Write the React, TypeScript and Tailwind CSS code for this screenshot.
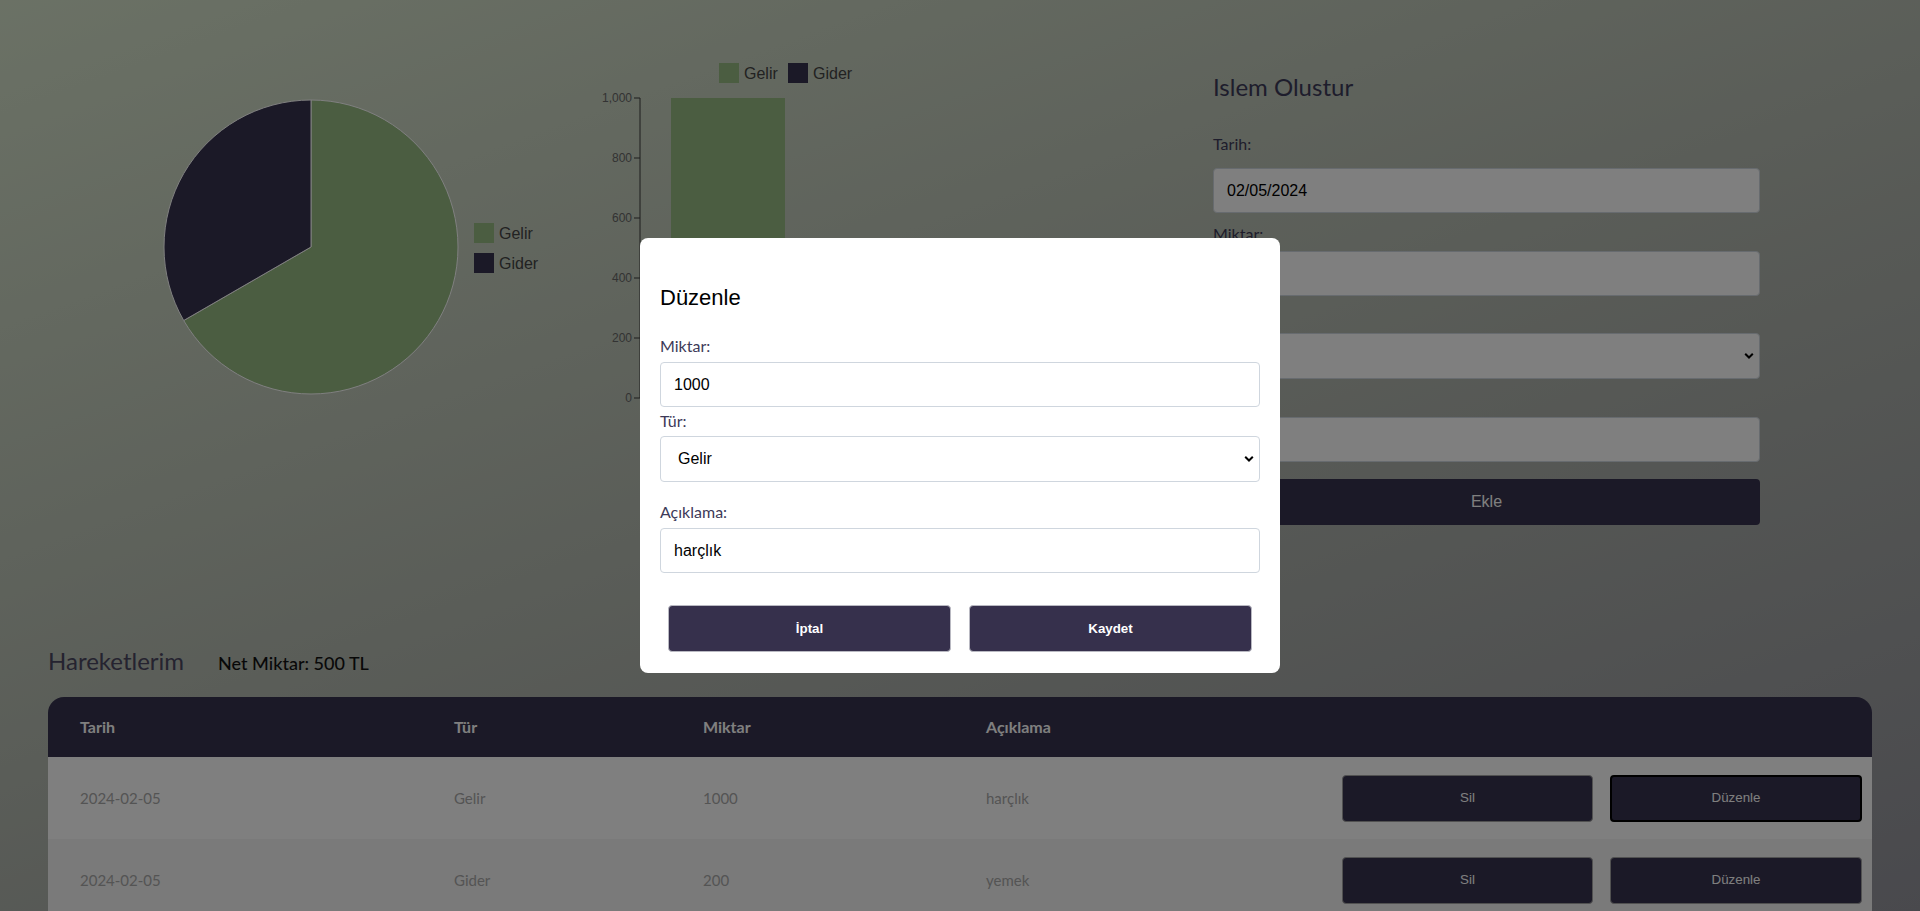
import React from 'react';

const CX = 263;
const CY = 207;
const R = 147;

type Row = { tarih: string; tur: string; miktar: number; aciklama: string };

const ROWS: Row[] = [
  { tarih: '2024-02-05', tur: 'Gelir', miktar: 1000, aciklama: 'harçlık' },
  { tarih: '2024-02-05', tur: 'Gider', miktar: 200, aciklama: 'yemek' },
  { tarih: '2024-02-05', tur: 'Gider', miktar: 300, aciklama: 'fatura' },
];

const GREEN = '#96bb82';
const DARK = '#36324e';

function pt(deg: number) {
  const a = (deg * Math.PI) / 180;
  return [CX + R * Math.sin(a), CY - R * Math.cos(a)];
}

function PieBlock() {
  const gelir = 1000;
  const gider = 500;
  const end = (360 * gelir) / (gelir + gider);
  const [ex, ey] = pt(end);
  return (
    <svg width={540} height={360} className="shrink-0">
      <path
        d={`M${CX},${CY} L${CX},${CY - R} A${R},${R} 0 1 1 ${ex},${ey} Z`}
        fill={GREEN}
        stroke="#fff"
        strokeWidth={1}
      />
      <path
        d={`M${CX},${CY} L${ex},${ey} A${R},${R} 0 0 1 ${CX},${CY - R} Z`}
        fill={DARK}
        stroke="#fff"
        strokeWidth={1}
      />
      {/* legend */}
      <rect x={426} y={183} width={20} height={20} fill={GREEN} />
      <text x={451} y={199} fontSize={16} fill="#444" fontFamily="Liberation Sans, Arial, sans-serif">
        Gelir
      </text>
      <rect x={426} y={213} width={20} height={20} fill={DARK} />
      <text x={451} y={229} fontSize={16} fill="#444" fontFamily="Liberation Sans, Arial, sans-serif">
        Gider
      </text>
    </svg>
  );
}

function BarBlock() {
  const ticks = [0, 200, 400, 600, 800, 1000];
  const y = (v: number) => 358 - (v / 1000) * 300;
  // axis sits at x=52 inside this svg (page x 640)
  return (
    <svg width={540} height={380} className="shrink-0" fontFamily="Liberation Sans, Arial, sans-serif">
      <rect x={131} y={23} width={20} height={20} fill={GREEN} />
      <text x={156} y={39} fontSize={16} fill="#444">Gelir</text>
      <rect x={200} y={23} width={20} height={20} fill={DARK} />
      <text x={225} y={39} fontSize={16} fill="#444">Gider</text>

      <line x1={52} y1={58} x2={52} y2={358} stroke="#3a3a3a" />
      {ticks.map((t) => (
        <g key={t}>
          <line x1={46} y1={y(t)} x2={52} y2={y(t)} stroke="#3a3a3a" />
          <text x={44} y={y(t) + 4} fontSize={12} fill="#666" textAnchor="end">
            {t === 1000 ? '1,000' : t}
          </text>
        </g>
      ))}
      <line x1={52} y1={358} x2={520} y2={358} stroke="#3a3a3a" />
      <rect x={83} y={y(1000)} width={114} height={300} fill={GREEN} />
      <rect x={201} y={y(500)} width={114} height={150} fill={DARK} />
    </svg>
  );
}

function Chevron() {
  return (
    <svg width={10} height={7} viewBox="0 0 10 7" className="pointer-events-none absolute right-[6px] top-1/2 -translate-y-1/2">
      <path d="M1.2 1.2 L5 5 L8.8 1.2" fill="none" stroke="#000" strokeWidth={2} />
    </svg>
  );
}

const fieldCls =
  "w-full rounded-[4px] border border-[#cfd6de] bg-white px-[13px] font-['Liberation_Sans',Arial,sans-serif] text-[16px] text-black outline-none";

function CreateForm() {
  return (
    <div className="ml-[85px] mt-[31px] flex w-[547px] shrink-0 flex-col">
      <h2 className="text-[24px] leading-8 text-[#3d3a58]">Islem Olustur</h2>
      <label className="mt-[29px] mb-[12px] text-[16px] leading-6 text-[#3d3a58]">Tarih:</label>
      <input readOnly value="02/05/2024" className={`${fieldCls} h-[45px]`} />
      <label className="mt-[9px] mb-[5px] text-[16px] leading-6 text-[#3d3a58]">Miktar:</label>
      <input readOnly value="" className={`${fieldCls} h-[45px]`} />
      <label className="mt-[8px] mb-[5px] text-[16px] leading-6 text-[#3d3a58]">Tür:</label>
      <div className="relative">
        <select defaultValue="Gelir" className={`${fieldCls} h-[46px] appearance-none pl-[17px]`}>
          <option>Gelir</option>
          <option>Gider</option>
        </select>
        <Chevron />
      </div>
      <label className="mt-[10px] mb-[4px] text-[16px] leading-6 text-[#3d3a58]">Açıklama:</label>
      <input readOnly value="" className={`${fieldCls} h-[45px]`} />
      <button
        type="button"
        className="mt-[17px] h-[46px] rounded-[4px] bg-[#36324e] font-['Liberation_Sans',Arial,sans-serif] text-[16px] text-white"
      >
        Ekle
      </button>
    </div>
  );
}

function Table() {
  return (
    <div className="mx-12 mt-5 overflow-hidden rounded-t-2xl">
      <div className="grid h-[60px] grid-cols-[374px_249px_283px_1fr] items-center bg-[#36324e] text-[16px] font-bold text-white">
        <div className="pl-8">Tarih</div>
        <div className="pl-8">Tür</div>
        <div className="pl-8">Miktar</div>
        <div className="pl-8">Açıklama</div>
      </div>
      {ROWS.map((r, i) => (
        <div
          key={i}
          className={`grid h-[82px] grid-cols-[374px_249px_283px_1fr] items-center text-[15px] text-[#a9a9a9] ${
            i % 2 === 0 ? 'bg-white' : 'bg-[#f4f4f4]'
          }`}
        >
          <div className="pl-8">{r.tarih}</div>
          <div className="pl-8">{r.tur}</div>
          <div className="pl-8">{r.miktar}</div>
          <div className="flex items-center justify-between pl-8 pr-[10px]">
            <span>{r.aciklama}</span>
            <div className="flex gap-[17px] font-['Liberation_Sans',Arial,sans-serif] text-[13.33px] text-white">
              <button type="button" className="h-[47px] w-[251px] rounded-[4px] border border-[#a3a3a3] bg-[#36324e]">
                Sil
              </button>
              <button
                type="button"
                className={`h-[47px] w-[252px] rounded-[4px] bg-[#36324e] ${
                  i === 0 ? 'border-2 border-black' : 'border border-[#a3a3a3]'
                }`}
              >
                Düzenle
              </button>
            </div>
          </div>
        </div>
      ))}
    </div>
  );
}

function EditModal() {
  return (
    <div className="fixed inset-0 flex items-center justify-center bg-black/50">
      <div className="flex w-[640px] flex-col rounded-lg bg-white px-5 pt-[46px] pb-[21px]">
        <h2 className="mb-[22px] font-['Liberation_Sans',Arial,sans-serif] text-[22px] leading-[28px] text-black">
          Düzenle
        </h2>
        <label className="mb-[4px] text-[16px] leading-6 text-[#3d3a58]">Miktar:</label>
        <input readOnly value="1000" className={`${fieldCls} h-[45px]`} />
        <label className="mt-[2px] mb-[3px] text-[16px] leading-6 text-[#3d3a58]">Tür:</label>
        <div className="relative">
          <select defaultValue="Gelir" className={`${fieldCls} h-[46px] appearance-none pl-[17px]`}>
            <option>Gelir</option>
            <option>Gider</option>
          </select>
          <Chevron />
        </div>
        <label className="mt-[18px] mb-[4px] text-[16px] leading-6 text-[#3d3a58]">Açıklama:</label>
        <input readOnly value="harçlık" className={`${fieldCls} h-[45px]`} />
        <div className="mt-[32px] flex gap-[18px] px-2 font-['Liberation_Sans',Arial,sans-serif] text-[13.33px] font-bold text-white">
          <button type="button" className="h-[47px] flex-1 rounded-[4px] border border-[#b9b9c2] bg-[#36304c]">
            İptal
          </button>
          <button type="button" className="h-[47px] flex-1 rounded-[4px] border border-[#b9b9c2] bg-[#36304c]">
            Kaydet
          </button>
        </div>
      </div>
    </div>
  );
}

export default function App() {
  return (
    <div className="relative min-h-screen bg-[linear-gradient(160deg,#d6e3cb_0%,#b0b5ad_55%,#93939b_100%)] bg-fixed pb-12 font-['Lato',sans-serif]">
      <div className="flex px-12 pt-10">
        <PieBlock />
        <BarBlock />
        <CreateForm />
      </div>

      <div className="mt-[120px] flex items-baseline gap-[34px] px-12">
        <h2 className="text-[24px] leading-8 text-[#4a4760]">Hareketlerim</h2>
        <span className="text-[18px] font-medium text-[#111]">Net Miktar: 500 TL</span>
      </div>

      <Table />

      <EditModal />
    </div>
  );
}
